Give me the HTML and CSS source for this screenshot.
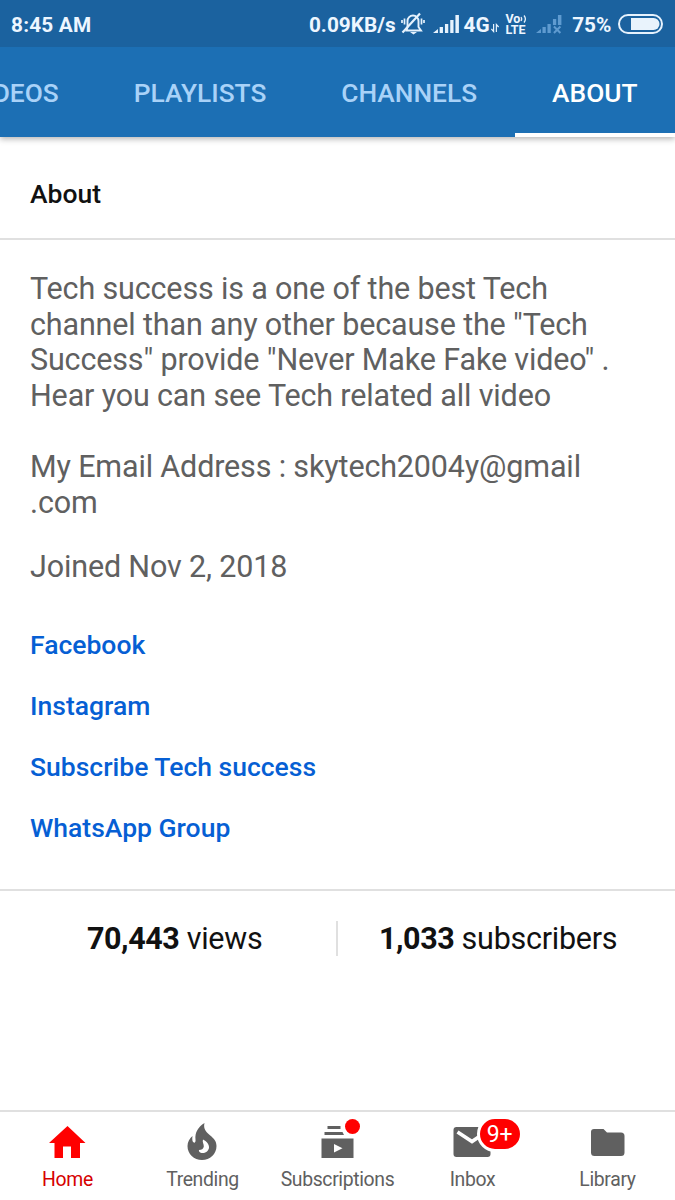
FILE: index.html
```html
<!DOCTYPE html>
<html lang="en">
<head>
    <meta charset="UTF-8">
    <meta name="viewport" content="width=device-width, initial-scale=1.0">
    <title>Tech success - About</title>
    <link rel="stylesheet" href="styles.css">
</head>
<body>
    <header class="header">
        <div class="status-bar">
            <span class="time">8:45 AM</span>
            <span class="speed">0.09KB/s</span>
            <svg class="mute" width="24" height="24" viewBox="0 0 24 24" fill="none" stroke="#e6f2fd" stroke-width="1.9">
                <path d="M5.500 18.500h14.500l-2.500-3.500V9a5.500 5.500 0 0 0-11 0v6z"/>
                <path d="M1.500 20.500L19 1.500" stroke-width="2.2"/>
                <path d="M3.500 6.500v6M1 8v3M20.500 6.500v6M23 8v3" stroke-width="1.7"/>
                <path d="M9 20h7l-3.500 2.500z" fill="#e6f2fd" stroke="none"/>
            </svg>
            <svg class="signal" width="27" height="20" viewBox="0 0 27 20" fill="#e6f2fd">
                <path d="M0 19l5-4v4zM6.700 13h3.300v6H6.700zM12 10h3.300v9H12zM17.300 6h3.300v13h-3.300zM22.500 1h3.500v18h-3.500z"/>
            </svg>
            <span class="network">4G</span>
            <svg class="data" width="8" height="10" viewBox="0 0 8 10" fill="none" stroke="#e6f2fd" stroke-width="1.200">
                <path d="M2.600 1v7.500L.4 6M5.400 9V1.500L7.600 4"/>
            </svg>
            <div class="volte">
                <span>Vo<svg width="7" height="8" viewBox="0 0 7 8" fill="none" stroke="#e6f2fd" stroke-width="1.300"><path d="M1 2q1.400 2 0 4M4 .5q2.800 3.500 0 7"/></svg></span>
                <span>LTE</span>
            </div>
            <svg class="no-signal" width="27" height="20" viewBox="0 0 27 20" fill="#5f9bd0">
                <path d="M0 19l5-4v4zM6.500 13h3.300v6H6.500zM11.500 10h3.300v9h-3.300zM17 5h3.300v6H17zM22 1h3.500v10H22z"/>
                <path d="M18 12.500l6.500 6.500M24.500 12.500L18 19" stroke="#5f9bd0" stroke-width="2"/>
            </svg>
            <span class="percent">75%</span>
            <svg class="battery" width="46" height="20" viewBox="0 0 46 20">
                <rect x="1" y="1" width="43" height="18" rx="9" fill="none" stroke="#e6f2fd" stroke-width="2"/>
                <path d="M13 4h22.500a6 6 0 0 1 0 12H13z" fill="#e9f3fc"/>
            </svg>
        </div>
        <nav class="tabs">
            <div class="tab">VIDEOS</div>
            <div class="tab">PLAYLISTS</div>
            <div class="tab">CHANNELS</div>
            <div class="tab active">ABOUT</div>
        </nav>
    </header>

    <main class="content">
        <h1 class="title">About</h1>
        <section class="about">
            <p class="description">Tech success is a one of the best Tech<br>channel than any other because the "Tech<br>Success" provide "Never Make Fake video" .<br>Hear you can see Tech related all video<br><br>My Email Address : skytech2004y@gmail<br>.com</p>
            <p class="joined">Joined Nov 2, 2018</p>
            <div class="links">
                <a>Facebook</a>
                <a>Instagram</a>
                <a>Subscribe Tech success</a>
                <a>WhatsApp Group</a>
            </div>
        </section>
        <section class="stats">
            <div class="stat views"><b>70,443</b> views</div>
            <div class="stat subscribers"><b>1,033</b> subscribers</div>
        </section>
    </main>

    <footer class="bottom-nav">
        <div class="nav-item selected">
            <div class="icon">
                <svg width="38" height="40" viewBox="0 0 38 40" fill="#ff0000"><path d="M19.500 4L1 21h5.500v15H15V24.500h8V36h9V21h5.500z"/></svg>
            </div>
            <span>Home</span>
        </div>
        <div class="nav-item">
            <div class="icon">
                <svg width="38" height="40" viewBox="0 0 38 40" fill="#606060">
                    <path d="M21.500 1C15 5 11.800 10.500 12.500 17.500C12.800 20 12 21 10.800 20.500C9.300 20 9 17 9.500 14C6.500 16.500 4.500 20 4.500 24C4.500 32 11 38 19 38S33.500 32 33.500 24C33.500 18 29.500 15.500 25 11.500C21.500 8 20.500 5 21.500 1z"/>
                    <path d="M20 17.500C23.500 19 26.500 22.500 26 26C25.300 29.500 22 31.500 18.500 31C16.500 30.500 15.500 29 16 28C18.500 28 20.500 27 20.800 24.500C21 22 19 20 20 17.500z" fill="#fff"/>
                </svg>
            </div>
            <span>Trending</span>
        </div>
        <div class="nav-item">
            <div class="icon">
                <svg width="38" height="40" viewBox="0 0 38 40" fill="#606060">
                    <path d="M9.500 4h13v3h-13zM6.500 10h18l1.500 3H6.500zM3.500 16.500h32V36h-32z"/>
                    <path d="M16 22v8.500l8.500-4.200z" fill="#fff"/>
                </svg>
                <span class="dot"></span>
            </div>
            <span>Subscriptions</span>
        </div>
        <div class="nav-item">
            <div class="icon">
                <svg width="38" height="40" viewBox="0 0 38 40">
                    <rect x=".5" y="5" width="37" height="30" rx="3" fill="#606060"/>
                    <path d="M4.500 10L19 19.500L33 10" fill="none" stroke="#fff" stroke-width="3.600"/>
                </svg>
                <span class="badge">9+</span>
            </div>
            <span>Inbox</span>
        </div>
        <div class="nav-item">
            <div class="icon">
                <svg width="38" height="40" viewBox="0 0 38 40" fill="#606060"><path d="M6 7h9.500l3.500 3.500h14q3.500 0 3.500 3.500v16.500q0 3.500-3.500 3.500H6.500q-3.500 0-3.500-3.500V10q0-3 3-3z"/></svg>
            </div>
            <span>Library</span>
        </div>
    </footer>
</body>
</html>
```
FILE: styles.css
```css
* {
    box-sizing: border-box;
}

body {
    font-family: Roboto, sans-serif;
    margin: 0;
    height: 1200px;
    background-color: #fff;
    color: #111;
    display: flex;
    flex-direction: column;
    overflow: hidden;
}

.header {
    background-color: #1c6fb4;
    height: 137px;
    box-shadow: 0 2px 6px rgba(0, 0, 0, 0.3);
}

.status-bar {
    display: flex;
    align-items: center;
    height: 47px;
    padding: 0 11px;
    background-color: #1b629f;
    color: #edf6ff;
    font-size: 20.8px;
    font-weight: 700;
    white-space: nowrap;
}

.time {
    width: 299px;
    padding-top: 2px;
    letter-spacing: 0.2px;
}

.speed {
    width: 92px;
    padding-top: 2px;
}

.mute {
    flex: none;
}

.signal {
    margin-left: 8px;
}

.network {
    margin-left: 4px;
    width: 28px;
    padding-top: 2px;
}

.data {
    margin: 8px 6px 0 0;
}

.volte {
    display: flex;
    flex-direction: column;
    width: 31px;
    font-size: 12.5px;
    line-height: 12px;
}

.volte span {
    height: 11px;
}

.percent {
    margin-left: 9px;
    width: 46px;
    padding-top: 2px;
}

.battery {
    flex: none;
}

.tabs {
    display: flex;
    justify-content: flex-end;
    height: 90px;
}

.tab {
    flex: none;
    padding: 0 37.5px;
    border-bottom: 4px solid transparent;
    color: #a9d2f8;
    font-size: 26.3px;
    font-weight: 500;
    line-height: 93px;
    height: 90px;
}

.tab.active {
    color: #fff;
    border-color: #fff;
}

.content {
    flex: 1;
}

.title {
    margin: 0;
    padding: 6px 30px 0;
    height: 103px;
    border-bottom: 2px solid #e0e0e0;
    font-size: 26.5px;
    font-weight: 500;
    line-height: 101px;
}

.about {
    height: 651px;
    padding: 31px 30px 0;
    border-bottom: 2px solid #e0e0e0;
}

.description,
.joined {
    margin: 0;
    color: #606060;
    font-size: 30.5px;
    letter-spacing: -0.15px;
    line-height: 35.6px;
    white-space: nowrap;
}

.joined {
    margin-top: 29px;
}

.links {
    display: flex;
    flex-direction: column;
    margin-top: 29px;
    color: #065fd4;
    font-size: 26.5px;
    font-weight: 500;
    line-height: 61px;
}

.stats {
    display: flex;
    padding-top: 30px;
}

.stat {
    height: 35px;
    font-size: 30.5px;
    letter-spacing: -0.25px;
    line-height: 35px;
    white-space: nowrap;
}

.stat b {
    letter-spacing: -0.45px;
}

.views {
    width: 338px;
    padding-left: 87px;
    border-right: 2px solid #e0e0e0;
}

.subscribers {
    padding-left: 41px;
}

.bottom-nav {
    display: flex;
    height: 90px;
    border-top: 2px solid #e0e0e0;
}

.nav-item {
    display: flex;
    flex-direction: column;
    align-items: center;
    flex: 1;
    padding-top: 10px;
    color: #606060;
    font-size: 19.4px;
    letter-spacing: -0.35px;
    line-height: 24px;
}

.nav-item.selected {
    color: #d60000;
}

.icon {
    position: relative;
    left: -1px;
    height: 46px;
}

.dot {
    position: absolute;
    top: -3px;
    right: -4px;
    width: 15px;
    height: 15px;
    border-radius: 50%;
    background-color: #ff0000;
}

.badge {
    position: absolute;
    top: -6px;
    left: 24px;
    width: 46px;
    height: 36px;
    border: 3px solid #fff;
    border-radius: 18px;
    background-color: #ff0000;
    color: #fff;
    font-size: 23px;
    line-height: 31px;
    text-align: center;
}
```
